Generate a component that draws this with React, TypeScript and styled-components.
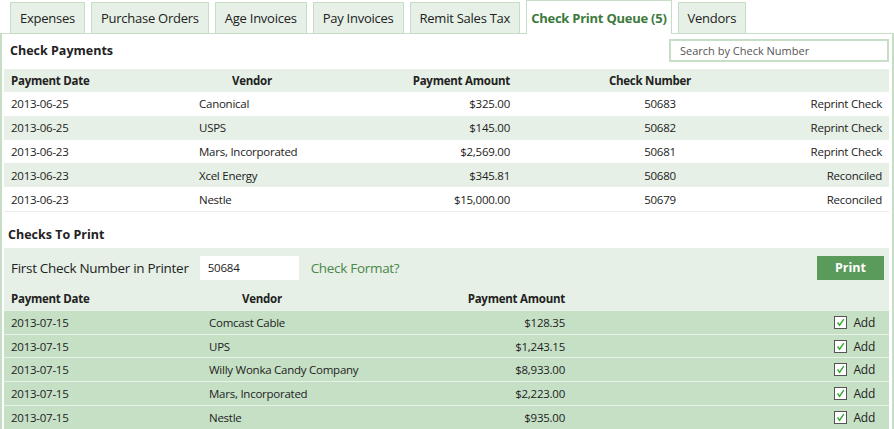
import React from "react";
import styled, { createGlobalStyle } from "styled-components";

const FONT = `"Open Sans", "Noto Sans", sans-serif`;

const GlobalStyle = createGlobalStyle`
    body {
        margin: 0;
        font-family: ${FONT};
        color: #222;
        background: #fff;
    }
`;

const tabs = [
    { id: 1, label: "Expenses" },
    { id: 2, label: "Purchase Orders" },
    { id: 3, label: "Age Invoices" },
    { id: 4, label: "Pay Invoices" },
    { id: 5, label: "Remit Sales Tax" },
    { id: 6, label: "Check Print Queue (5)", active: true },
    { id: 7, label: "Vendors" },
];

const payments = [
    { date: "2013-06-25", vendor: "Canonical", amount: "$325.00", check: "50683", status: "Reprint Check" },
    { date: "2013-06-25", vendor: "USPS", amount: "$145.00", check: "50682", status: "Reprint Check" },
    { date: "2013-06-23", vendor: "Mars, Incorporated", amount: "$2,569.00", check: "50681", status: "Reprint Check" },
    { date: "2013-06-23", vendor: "Xcel Energy", amount: "$345.81", check: "50680", status: "Reconciled" },
    { date: "2013-06-23", vendor: "Nestle", amount: "$15,000.00", check: "50679", status: "Reconciled" },
];

const toPrint = [
    { date: "2013-07-15", vendor: "Comcast Cable", amount: "$128.35" },
    { date: "2013-07-15", vendor: "UPS", amount: "$1,243.15" },
    { date: "2013-07-15", vendor: "Willy Wonka Candy Company", amount: "$8,933.00" },
    { date: "2013-07-15", vendor: "Mars, Incorporated", amount: "$2,223.00" },
    { date: "2013-07-15", vendor: "Nestle", amount: "$935.00" },
];

const CheckBox = () => (
    <Box>
        <svg width="9" height="9" viewBox="0 0 9 9">
            <path d="M1.5 4.5 L3.6 7.2 L7.8 1.2" fill="none" stroke="#2faa2f" strokeWidth="1.4" />
        </svg>
    </Box>
);

const App = () => {
    return (
        <Page>
            <GlobalStyle />
            <TabBar>
                {tabs.map(({ id, label, active }) => (
                    <Tab key={id} $active={!!active}>{label}</Tab>
                ))}
            </TabBar>
            <Panel>
                <PanelHead>
                    <Title>Check Payments</Title>
                    <Search placeholder="Search by Check Number" />
                </PanelHead>

                <PayRow $kind="head">
                    <Cell>Payment Date</Cell>
                    <Cell $align="center">Vendor</Cell>
                    <Cell $align="right">Payment Amount</Cell>
                    <Cell $align="center" $shift={-10}>Check Number</Cell>
                    <Cell />
                </PayRow>
                {payments.map((p, i) => (
                    <PayRow key={p.check} $kind={i % 2 ? "alt" : "plain"}>
                        <Cell>{p.date}</Cell>
                        <Cell>{p.vendor}</Cell>
                        <Cell $align="right">{p.amount}</Cell>
                        <Cell $align="center">{p.check}</Cell>
                        <Cell $align="right">{p.status}</Cell>
                    </PayRow>
                ))}
                <TableEnd />

                <SubTitle>Checks To Print</SubTitle>
                <PrintBar>
                    <BarLabel>First Check Number in Printer</BarLabel>
                    <NumberInput defaultValue="50684" />
                    <FormatLink>Check Format?</FormatLink>
                    <PrintButton>Print</PrintButton>
                </PrintBar>

                <PrintRow $head>
                    <Cell>Payment Date</Cell>
                    <Cell $align="center">Vendor</Cell>
                    <Cell $align="right">Payment Amount</Cell>
                    <Cell />
                </PrintRow>
                {toPrint.map((p) => (
                    <PrintRow key={p.vendor}>
                        <Cell>{p.date}</Cell>
                        <Cell>{p.vendor}</Cell>
                        <Cell $align="right">{p.amount}</Cell>
                        <AddCell>
                            <CheckBox />
                            Add
                        </AddCell>
                    </PrintRow>
                ))}
            </Panel>
        </Page>
    );
};

const Page = styled.div`
    width: 894px;
`;

const TabBar = styled.div`
    display: flex;
    align-items: flex-end;
    gap: 6px;
    height: 33px;
    padding-left: 10px;
`;

const Tab = styled.div<{ $active: boolean }>`
    height: ${(p) => (p.$active ? "34px" : "31px")};
    box-sizing: border-box;
    display: flex;
    align-items: center;
    padding: 0 ${(p) => (p.$active ? "4px" : "9px")};
    font-size: 13px;
    letter-spacing: -0.25px;
    font-weight: ${(p) => (p.$active ? 700 : 400)};
    color: ${(p) => (p.$active ? "#3d7a3d" : "#222")};
    background: ${(p) => (p.$active ? "#fff" : "#e6f0e6")};
    border: 1px solid #c6ddc6;
    border-bottom: none;
    margin-bottom: ${(p) => (p.$active ? "-1px" : "0")};
    position: relative;
    z-index: ${(p) => (p.$active ? 1 : 0)};
`;

const Panel = styled.div`
    border: 1px solid #c6ddc6;
    border-left-width: 2px;
    border-right-width: 2px;
    border-bottom: none;
    padding: 0 3px 0 2px;
    height: 396px;
    box-sizing: border-box;
`;

const PanelHead = styled.div`
    display: flex;
    align-items: center;
    justify-content: space-between;
    height: 35px;
    padding: 0 0 2px 6px;
    box-sizing: border-box;
`;

const Title = styled.div`
    font-size: 12.5px;
    font-weight: 700;
`;

const Search = styled.input`
    width: 220px;
    height: 23px;
    box-sizing: border-box;
    border: 2px solid #c6ddc6;
    padding: 0 9px;
    font-family: ${FONT};
    font-size: 11px;
    outline: none;
    &::placeholder {
        color: #555;
    }
`;

const rowBg = { head: "#e6f0e6", alt: "#e6f0e6", plain: "#fff" };

const PayRow = styled.div<{ $kind: "head" | "alt" | "plain" }>`
    display: grid;
    grid-template-columns: 188px 120px 205px 286px 1fr;
    align-items: center;
    height: ${(p) => (p.$kind === "head" ? "23px" : "23.8px")};
    background: ${(p) => rowBg[p.$kind]};
    font-size: 11.5px;
    letter-spacing: -0.25px;
    font-weight: ${(p) => (p.$kind === "head" ? 700 : 400)};
`;

const Cell = styled.div<{ $align?: "left" | "center" | "right"; $shift?: number }>`
    padding: 0 7px;
    text-align: ${(p) => p.$align || "left"};
    white-space: nowrap;
    ${(p) => (p.$shift ? `position: relative; left: ${p.$shift}px;` : "")}
`;

const TableEnd = styled.div`
    border-top: 1px solid #e6f0e6;
`;

const SubTitle = styled.div`
    font-size: 12.5px;
    font-weight: 700;
    padding: 14px 0 0 4px;
    height: 22px;
`;

const PrintBar = styled.div`
    display: flex;
    align-items: center;
    height: 40px;
    background: #e6f0e6;
    padding: 0 5px 0 7px;
`;

const BarLabel = styled.span`
    font-size: 13.5px;
    letter-spacing: -0.3px;
    color: #222;
`;

const NumberInput = styled.input`
    width: 99px;
    height: 24px;
    box-sizing: border-box;
    border: none;
    margin-left: 11px;
    padding: 0 8px;
    font-family: ${FONT};
    font-size: 11.5px;
    letter-spacing: -0.2px;
    color: #222;
    outline: none;
`;

const FormatLink = styled.span`
    font-size: 13.5px;
    letter-spacing: -0.3px;
    color: #4a874a;
    margin-left: 12px;
    flex: 1;
`;

const PrintButton = styled.button`
    width: 67px;
    height: 24px;
    border: none;
    background: #5a9a5a;
    color: #fff;
    font-family: ${FONT};
    font-size: 12.5px;
    font-weight: 700;
    padding: 0;
`;

const PrintRow = styled.div<{ $head?: boolean }>`
    display: grid;
    grid-template-columns: 198px 120px 250px 1fr;
    align-items: center;
    height: ${(p) => (p.$head ? "22px" : "22.75px")};
    background: ${(p) => (p.$head ? "#e6f0e6" : "#c6e0c6")};
    border-top: ${(p) => (p.$head ? "none" : "1px solid #e8f2e8")};
    font-size: 11.5px;
    letter-spacing: -0.25px;
    font-weight: ${(p) => (p.$head ? 700 : 400)};
`;

const AddCell = styled.div`
    display: flex;
    align-items: center;
    justify-content: flex-end;
    gap: 6px;
    padding-right: 14px;
    font-size: 12px;
`;

const Box = styled.span`
    width: 13px;
    height: 13px;
    box-sizing: border-box;
    border: 1px solid #555;
    background: #fff;
    display: flex;
    align-items: center;
    justify-content: center;
`;

export default App;
